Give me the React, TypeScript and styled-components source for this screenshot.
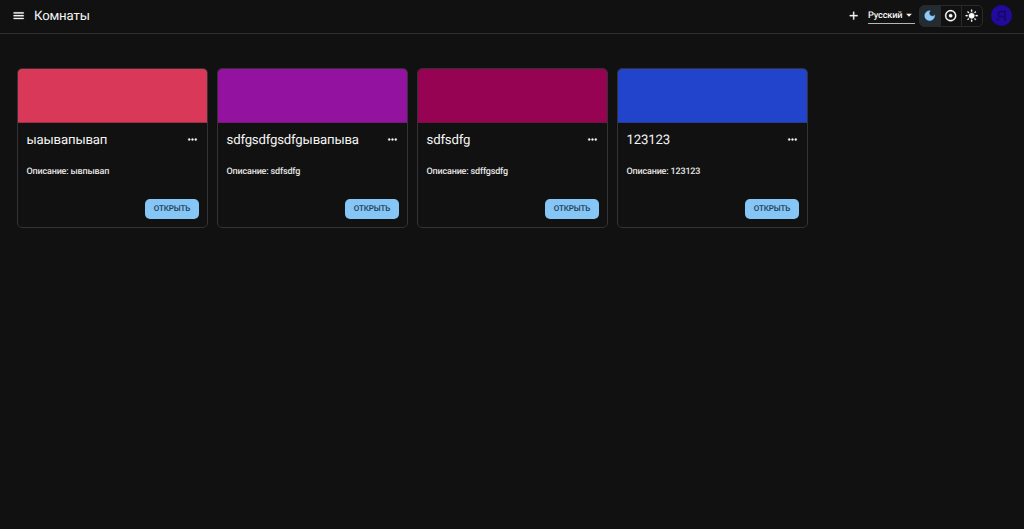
import React from "react";
import styled, { createGlobalStyle } from "styled-components";
import { MdAdd, MdAdjust, MdArrowDropDown, MdDarkMode, MdLightMode, MdMenu, MdMoreHoriz } from "react-icons/md";

const GlobalStyle = createGlobalStyle`
  * { box-sizing: border-box; }
  body {
    margin: 0;
    background: #111111;
    color: #f5f5f5;
    font-family: Roboto, "Noto Sans", sans-serif;
    text-rendering: geometricPrecision;
  }
  button { font-family: inherit; color: inherit; background: none; border: 0; padding: 0; margin: 0; text-rendering: inherit; }
  svg { display: block; flex: none; }
`;

const Page = styled.div`
  min-height: 100vh;
`;

const AppBar = styled.header`
  display: flex;
  align-items: center;
  height: 34px;
  padding: 0 12px 2px;
  border-bottom: 1px solid #303030;
`;

const IconButton = styled.button<{ $size: number }>`
  display: flex;
  align-items: center;
  justify-content: center;
  width: 14px;
  font-size: ${(p) => p.$size}px;
  path:not([fill="none"]) { stroke: currentColor; stroke-width: 0.6px; }
  path[fill="none"] { stroke: none; }
`;

const PageTitle = styled.h1`
  margin: 0 auto 0 8px;
  padding-top: 2px;
  font-size: 13.2px;
  font-weight: 400;
  line-height: 20px;
  letter-spacing: -0.16px;
`;

const LanguageSelect = styled.button`
  display: flex;
  align-items: center;
  width: 47px;
  height: 17px;
  margin: 0 4px 0 7px;
  border-bottom: 1px solid #b5b5b5;
  font-size: 9.2px;
  font-weight: 500;
  line-height: 16px;
  letter-spacing: -0.16px;
`;

const SelectLabel = styled.span`
  padding-top: 1px;
`;

const SelectArrow = styled(MdArrowDropDown)`
  margin: 0 0 0 auto;
  font-size: 14px;
`;

const ThemeSwitch = styled.div`
  display: flex;
  width: 64px;
  height: 22px;
  margin-right: 8px;
  border: 1px solid #2a2a2a;
  border-radius: 5px;
  overflow: hidden;
`;

const ThemeOption = styled.button<{ $active?: boolean }>`
  display: flex;
  flex: 1;
  align-items: center;
  justify-content: center;
  font-size: 13.33px;
  color: ${(p) => (p.$active ? "#90caf9" : "#ffffff")};
  background: ${(p) => (p.$active ? "#242c33" : "transparent")};
  & + & { border-left: 1px solid #2a2a2a; }
  path:not([fill="none"]) { stroke: currentColor; stroke-width: 0.6px; }
  path[fill="none"] { stroke: none; }
`;

const Avatar = styled.div`
  width: 21px;
  height: 21px;
  border-radius: 50%;
  overflow: hidden;
  background: #220a9c;
`;

const RoomGrid = styled.main`
  display: grid;
  grid-template-columns: repeat(4, 191px);
  column-gap: 9px;
  padding: 34px 17px;
`;

const Card = styled.article`
  display: flex;
  flex-direction: column;
  height: 160px;
  border: 1px solid #333333;
  border-radius: 5px;
  overflow: hidden;
`;

const Cover = styled.div<{ $color: string }>`
  height: 54px;
  border-bottom: 1px solid rgba(51, 51, 51, 0.4);
  background: ${(p) => p.$color};
`;

const CardHeader = styled.div`
  display: flex;
  align-items: center;
  justify-content: space-between;
  height: 33px;
  padding: 0 8px 0 8.5px;
`;

const CardTitle = styled.h2`
  margin: 0;
  padding-top: 2px;
  font-size: 13.2px;
  font-weight: 400;
  line-height: 20px;
  letter-spacing: -0.18px;
`;

const Description = styled.p`
  margin: 9px 8.5px 0;
  font-size: 9px;
  font-weight: 500;
  line-height: 14px;
  letter-spacing: -0.17px;
  color: #e6e6e6;
`;

const CardActions = styled.div`
  display: flex;
  justify-content: flex-end;
  margin-top: auto;
  padding: 0 8px 8px;
`;

const OpenButton = styled.button`
  width: 54px;
  height: 20px;
  border-radius: 5px;
  background: #86c6f7;
  color: #1f3d55;
  font-size: 8px;
  font-weight: 500;
  line-height: 20px;
  letter-spacing: -0.1px;
`;

const rooms = [
  { title: "ыаывапывап", description: "ывпывап", color: "#d93859" },
  { title: "sdfgsdfgsdfgывапыва", description: "sdfsdfg", color: "#9312a0" },
  { title: "sdfsdfg", description: "sdffgsdfg", color: "#970353" },
  { title: "123123", description: "123123", color: "#2244cc" },
];

export default function App() {
  return (
    <Page>
      <GlobalStyle />
      <AppBar>
        <IconButton $size={13.33} aria-label="Меню"><MdMenu /></IconButton>
        <PageTitle>Комнаты</PageTitle>
        <IconButton $size={13.33} aria-label="Добавить"><MdAdd /></IconButton>
        <LanguageSelect><SelectLabel>Русский</SelectLabel><SelectArrow /></LanguageSelect>
        <ThemeSwitch>
          <ThemeOption $active><MdDarkMode /></ThemeOption>
          <ThemeOption><MdAdjust /></ThemeOption>
          <ThemeOption><MdLightMode /></ThemeOption>
        </ThemeSwitch>
        <Avatar>
          <svg width="21" height="21" viewBox="0 0 21 21" fill="none" stroke="#160862" strokeWidth="1.6">
            <path d="M7.5 12V8L9 6.5H14V15M7 11.5H14M5.5 14.5H8.5M12.5 14.5H15.5" />
          </svg>
        </Avatar>
      </AppBar>
      <RoomGrid>
        {rooms.map((room) => (
          <Card key={room.title}>
            <Cover $color={room.color} />
            <CardHeader>
              <CardTitle>{room.title}</CardTitle>
              <IconButton $size={13} aria-label="Ещё"><MdMoreHoriz /></IconButton>
            </CardHeader>
            <Description>Описание: {room.description}</Description>
            <CardActions>
              <OpenButton>ОТКРЫТЬ</OpenButton>
            </CardActions>
          </Card>
        ))}
      </RoomGrid>
    </Page>
  );
}
